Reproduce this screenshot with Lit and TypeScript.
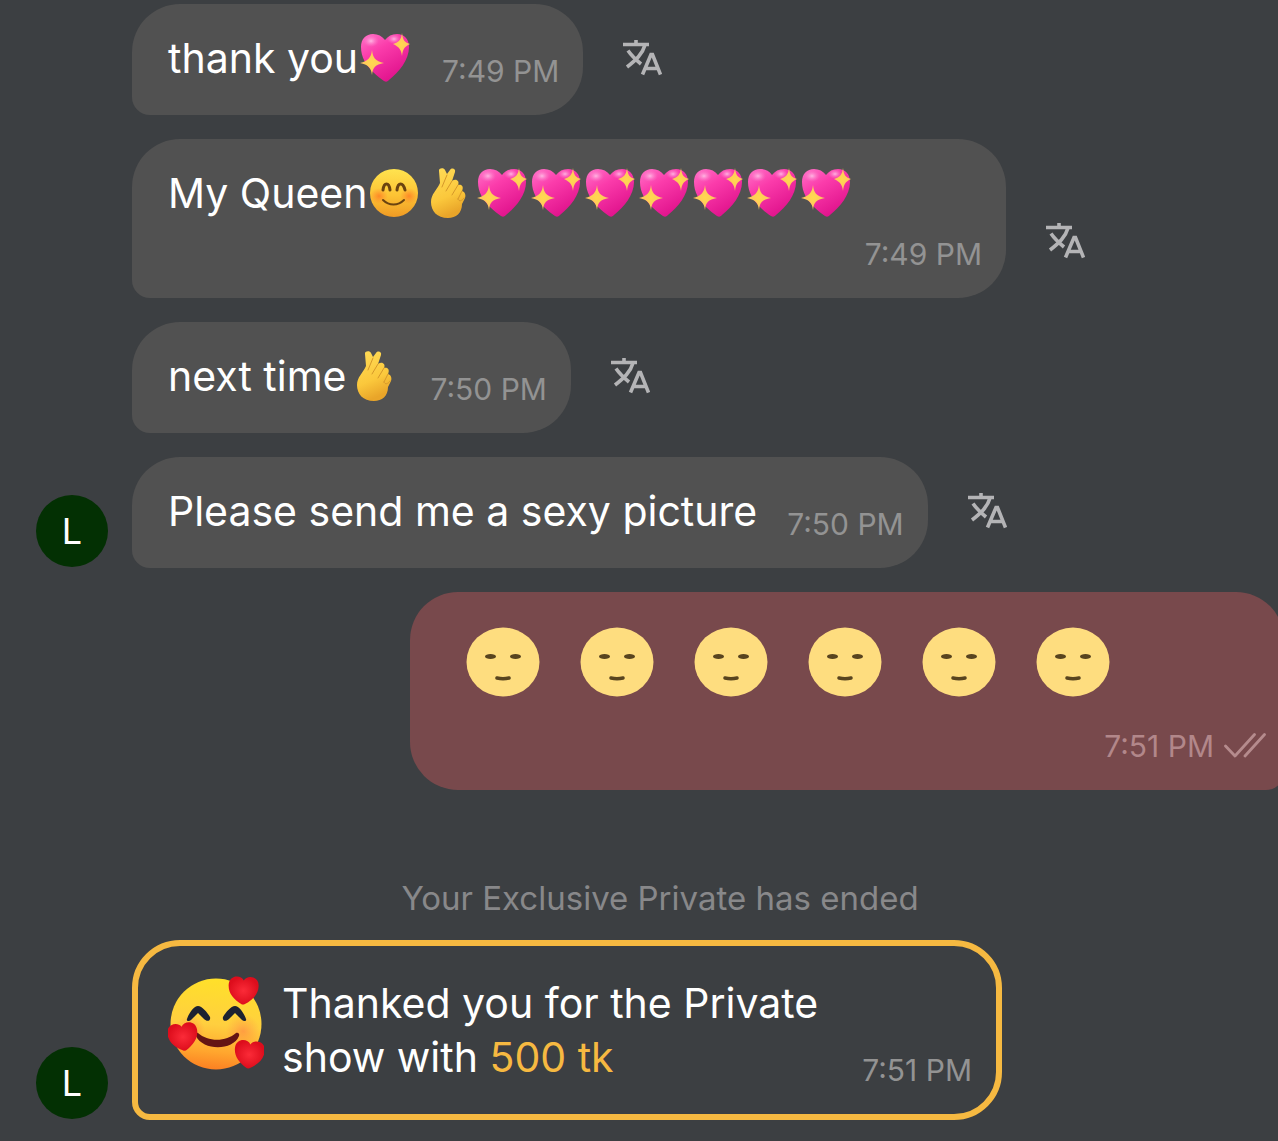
import { LitElement, html, svg, css, nothing } from "lit";
import { customElement, property } from "lit/decorators.js";

type EmojiName = "heart" | "smile" | "fingers" | "blank" | "adore";

interface Message {
  text?: string;
  emoji?: EmojiName[];
  time: string;
  avatar?: string;
  wide?: boolean;
}

const HEART = "M15 5C12-1 0 0 0 10c0 8 5 14 14 19h2c9-5 14-11 14-19C30 0 18-1 15 5z";
const BROW = "M19 43C21 37 26 30 30 30C34 30 39 36 42 41C43 45 39 46 36 43L30 37L23 44C21 46 18 45 19 43z";

const drawings: Record<EmojiName, { box: string; label: string; art: unknown }> = {
  heart: {
    box: "0 0 54 54",
    label: "sparkling heart",
    art: svg`
      <defs>
        <linearGradient id="pink" x1="0" y1="0" x2="0.6" y2="1">
          <stop offset="0" stop-color="#ff74c8" />
          <stop offset="0.4" stop-color="#fb3cab" />
          <stop offset="1" stop-color="#e0128c" />
        </linearGradient>
        <radialGradient id="shine">
          <stop offset="0" stop-color="#ffc0e6" stop-opacity="0.9" />
          <stop offset="1" stop-color="#ff7ccb" stop-opacity="0" />
        </radialGradient>
        <radialGradient id="star">
          <stop offset="0" stop-color="#ffd94e" />
          <stop offset="1" stop-color="#ffc163" />
        </radialGradient>
      </defs>
      <path fill="url(#pink)" d="M27 9C24 5 20 3 15 3 8 3 3 8 3 16c0 10 5 18 12 25 4 4 8 7 11 9 2 1 3 1 5-1 10-8 20-20 20-33 0-8-5-13-12-13-5 0-9 2-12 6z" />
      <ellipse cx="13" cy="10" rx="8" ry="6" fill="url(#shine)" />
      <ellipse cx="36" cy="8" rx="7" ry="5" fill="url(#shine)" />
      <path fill="url(#star)" d="M14 19c1 8 3 11 12 13-9 2-11 4-12 12-1-8-4-10-12-12 8-2 11-5 12-13z" />
      <path fill="url(#star)" d="M44 2c1 7 2 9 8 11-6 3-7 5-8 12-1-7-3-9-9-12 6-2 8-4 9-11z" />
    `,
  },
  smile: {
    box: "0 0 54 54",
    label: "smiling face",
    art: svg`
      <defs>
        <linearGradient id="face" x1="0" y1="0" x2="0" y2="1">
          <stop offset="0" stop-color="#ffe34f" />
          <stop offset="0.55" stop-color="#fdc334" />
          <stop offset="1" stop-color="#ef9a24" />
        </linearGradient>
        <radialGradient id="blush">
          <stop offset="0" stop-color="#ff6a1f" stop-opacity="0.65" />
          <stop offset="1" stop-color="#ff7a2a" stop-opacity="0" />
        </radialGradient>
      </defs>
      <circle cx="27" cy="27" r="24" fill="url(#face)" />
      <ellipse cx="12" cy="30" rx="9" ry="8" fill="url(#blush)" />
      <ellipse cx="42" cy="30" rx="9" ry="8" fill="url(#blush)" />
      <g fill="none" stroke="#6b4310" stroke-linecap="round">
        <path stroke-width="3" d="M16 24c1-8 6-8 7 0M30 24c1-8 6-8 8 0" />
        <path stroke-width="2" d="M16 34c6 6 15 6 21 0" />
      </g>
    `,
  },
  fingers: {
    box: "0 0 54 54",
    label: "crossed fingers heart",
    art: svg`
      <defs>
        <linearGradient id="skin" x1="0" y1="0" x2="0.3" y2="1">
          <stop offset="0" stop-color="#ffdc58" />
          <stop offset="0.65" stop-color="#fbc83c" />
          <stop offset="1" stop-color="#e9a529" />
        </linearGradient>
      </defs>
      <path fill="url(#skin)" d="M18 5c-1-3 5-4 6-1l2 4 3-4c2-3 6-1 5 2l-3 9c4-3 8 0 6 4 4-1 6 2 4 6 3 1 4 4 3 7l-3 6c0 9-6 14-14 14-11 0-17-7-17-16 0-8 6-12 9-19z" />
      <g fill="none" stroke="#d6982a" stroke-linecap="round">
        <path d="M26 9l-5 12M31 15l-6 10M37 19l-6 10M41 25l-4 8M43 32c-2 3-5 4-6 1" />
      </g>
    `,
  },
  blank: {
    box: "0 0 74 70",
    label: "expressionless face",
    art: svg`
      <ellipse cx="37" cy="35" rx="36.5" ry="34.5" fill="#fedd7f" />
      <g fill="#58441f">
        <ellipse cx="24.5" cy="29.5" rx="5.5" ry="2.5" />
        <ellipse cx="49.5" cy="29.5" rx="5.5" ry="2.5" />
      </g>
      <path d="M31 51c4 1 8 1 12 0" fill="none" stroke="#58441f" stroke-width="3.5" stroke-linecap="round" />
    `,
  },
  adore: {
    box: "0 0 96 96",
    label: "smiling face with hearts",
    art: svg`
      <defs>
        <linearGradient id="gold" x1="0.5" y1="0" x2="0.4" y2="1">
          <stop offset="0" stop-color="#ffe02a" />
          <stop offset="0.5" stop-color="#ffcf3f" />
          <stop offset="0.8" stop-color="#ffa62e" />
          <stop offset="1" stop-color="#fb7f22" />
        </linearGradient>
        <radialGradient id="glow">
          <stop offset="0" stop-color="#ff7a45" stop-opacity="0.55" />
          <stop offset="1" stop-color="#ff8a45" stop-opacity="0" />
        </radialGradient>
        <radialGradient id="red">
          <stop offset="0" stop-color="#fb2b38" />
          <stop offset="1" stop-color="#dd0d1c" />
        </radialGradient>
      </defs>
      <circle cx="48" cy="48" r="45.5" fill="url(#gold)" />
      <circle cx="22" cy="54" r="15" fill="url(#glow)" />
      <circle cx="75" cy="55" r="17" fill="url(#glow)" />
      <g fill="#1d2231">
        <path d="${BROW}" />
        <path transform="translate(97 0) scale(-1 1)" d="${BROW}" />
      </g>
      <path fill="#641414" d="M30 57c10 9 28 9 38 0 2-1 4 1 3 3-6 15-36 15-43 0-1-2 0-4 2-3z" />
      <g fill="url(#red)">
        <path transform="translate(61 -1) rotate(2)" d="${HEART}" />
        <path transform="translate(-2 48) rotate(-8)" d="${HEART}" />
        <path transform="translate(68 62) rotate(6)" d="${HEART}" />
      </g>
    `,
  },
};

@customElement("chat-emoji")
class ChatEmoji extends LitElement {
  @property() name: EmojiName = "heart";

  static styles = css`
    :host {
      display: inline-block;
      width: 54px;
      height: 54px;
      vertical-align: top;
    }
    :host([name="blank"]) {
      width: 74px;
      height: 70px;
    }
    :host([name="adore"]) {
      width: 96px;
      height: 96px;
    }
    .art {
      display: block;
      width: 100%;
      height: 100%;
    }
  `;

  render() {
    const { box, label, art } = drawings[this.name];
    return html`<svg class="art" viewBox=${box} role="img" aria-label=${label}>${art}</svg>`;
  }
}

const received: Message[] = [
  { text: "thank you", emoji: ["heart"], time: "7:49 PM" },
  {
    text: "My Queen",
    emoji: ["smile", "fingers", "heart", "heart", "heart", "heart", "heart", "heart", "heart"],
    time: "7:49 PM",
    wide: true,
  },
  { text: "next time", emoji: ["fingers"], time: "7:50 PM" },
  { text: "Please send me a sexy picture", time: "7:50 PM", avatar: "L" },
];

const sent: Message = {
  emoji: ["blank", "blank", "blank", "blank", "blank", "blank"],
  time: "7:51 PM",
};

@customElement("app-root")
class AppRoot extends LitElement {
  static styles = css`
    :host {
      display: block;
      box-sizing: border-box;
      min-height: 100vh;
      overflow: hidden;
      padding: 4px 0 20px 36px;
      background: #3c3f42;
      color: #ffffff;
      font-family: Inter, Roboto, "Liberation Sans", sans-serif;
      font-size: 41px;
      line-height: 54px;
    }
    .thread {
      display: flex;
      flex-direction: column;
      gap: 24px;
      margin-right: -6px;
    }
    .row {
      display: flex;
      align-items: flex-end;
    }
    .row.own {
      justify-content: flex-end;
    }
    .slot {
      flex: none;
      width: 96px;
    }
    .avatar {
      display: flex;
      align-items: center;
      justify-content: center;
      width: 72px;
      height: 72px;
      margin-bottom: 1px;
      border-radius: 50%;
      background: #033003;
      font-size: 36px;
    }
    .bubble {
      box-sizing: border-box;
      display: flex;
      align-items: flex-end;
      gap: 30px;
      padding: 27px 24px 26px 36px;
      border-radius: 48px 48px 48px 18px;
      background: #515151;
    }
    .bubble.wide {
      flex-direction: column;
      gap: 12px;
      width: 874px;
    }
    .bubble.sent {
      flex-direction: column;
      justify-content: space-between;
      gap: 31px;
      width: 874px;
      padding: 35px 18px 26px 56px;
      border-radius: 48px 48px 18px 48px;
      background: #78494c;
    }
    .text {
      margin: 0;
      padding-bottom: 4px;
    }
    .bubble.wide .text,
    .faces {
      align-self: flex-start;
    }
    .faces {
      display: flex;
      gap: 40px;
    }
    .time {
      flex: none;
      color: #939393;
      font-size: 30px;
      line-height: 36px;
    }
    .sent .time {
      color: #b2878a;
    }
    .status {
      display: flex;
      align-items: center;
      gap: 10px;
    }
    .ticks {
      width: 42px;
      height: 26px;
      color: #b58b8d;
    }
    .translate {
      flex: none;
      margin: 0 0 39px 40px;
      padding: 0;
      border: 0;
      background: none;
      color: #b4b4b6;
      cursor: pointer;
    }
    .translate-icon {
      display: block;
      width: 39px;
      height: 36px;
    }
    .notice {
      margin: 64px 0 -2px;
      color: #88888a;
      font-size: 33px;
      line-height: 40px;
      text-align: center;
    }
    .bubble.thanks {
      gap: 18px;
      width: 870px;
      padding: 30px 24px 26px 30px;
      border: 6px solid #f6b941;
      background: none;
    }
    .thanks .text {
      flex: 1;
    }
    .thanks chat-emoji {
      flex: none;
      align-self: flex-start;
    }
    .amount {
      color: #f6b941;
    }
  `;

  private emoji(names: EmojiName[] = []) {
    return names.map((name) => html`<chat-emoji name=${name}></chat-emoji>`);
  }

  private avatar(letter?: string) {
    return html`<div class="slot">${letter ? html`<div class="avatar">${letter}</div>` : nothing}</div>`;
  }

  private translateButton() {
    return html`<button class="translate" type="button" aria-label="Translate">
      <svg class="translate-icon" viewBox="0 0 39 36" fill="none" stroke="currentColor" stroke-width="3.6">
        <path d="M0 4.5H26M13 0V5M22 5C19.5 14 13 20 4 27M5 10.5C8 15 12 19 18 24" />
        <path d="M19.5 34.5L28 14.5H29.5L37.5 34.5M22.5 28.5H35" />
      </svg>
    </button>`;
  }

  private message(m: Message) {
    return html`<div class="row">
      ${this.avatar(m.avatar)}
      <div class="bubble ${m.wide ? "wide" : ""}">
        <p class="text">${m.text}${this.emoji(m.emoji)}</p>
        <time class="time">${m.time}</time>
      </div>
      ${this.translateButton()}
    </div>`;
  }

  render() {
    return html`<main class="thread">
      ${received.map((m) => this.message(m))}
      <div class="row own">
        <div class="bubble sent">
          <div class="faces">${this.emoji(sent.emoji)}</div>
          <div class="status">
            <time class="time">${sent.time}</time>
            <svg class="ticks" viewBox="0 0 42 26" fill="none" stroke="currentColor" stroke-width="2.8" stroke-linecap="round" stroke-linejoin="round" role="img" aria-label="Read">
              <path d="M1.5 13L11 23L30.5 1.5M21 23L40.5 1.5" />
            </svg>
          </div>
        </div>
      </div>
      <p class="notice">Your Exclusive Private has ended</p>
      <div class="row">
        ${this.avatar("L")}
        <div class="bubble thanks">
          <chat-emoji name="adore"></chat-emoji>
          <p class="text">Thanked you for the Private show with <span class="amount">500 tk</span></p>
          <time class="time">7:51 PM</time>
        </div>
      </div>
    </main>`;
  }
}
